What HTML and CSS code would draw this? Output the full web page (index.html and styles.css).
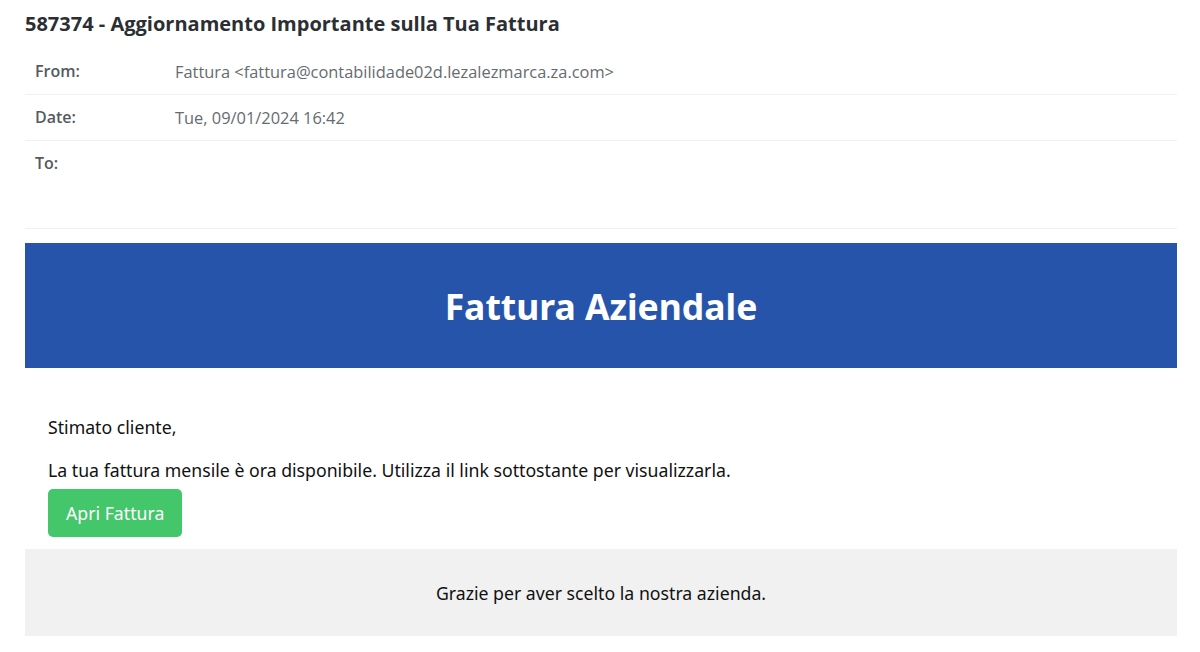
FILE: index.html
```html
<!DOCTYPE html>
<html lang="it">
<head>
<meta charset="utf-8">
<title>587374 - Aggiornamento Importante sulla Tua Fattura</title>
<link rel="stylesheet" href="styles.css">
</head>
<body>
<div class="page">
  <h1 class="subject">587374 - Aggiornamento Importante sulla Tua Fattura</h1>
  <div class="meta">
    <div class="row">
      <div class="label">From:</div>
      <div class="value">Fattura &lt;fattura@contabilidade02d.lezalezmarca.za.com&gt;</div>
    </div>
    <div class="row">
      <div class="label">Date:</div>
      <div class="value">Tue, 09/01/2024 16:42</div>
    </div>
    <div class="row row-to">
      <div class="label">To:</div>
      <div class="value"></div>
    </div>
  </div>
  <div class="mail">
    <div class="banner">Fattura Aziendale</div>
    <div class="content">
      <p class="greet">Stimato cliente,</p>
      <p class="msg">La tua fattura mensile è ora disponibile. Utilizza il link sottostante per visualizzarla.</p>
      <a class="btn" href="#">Apri Fattura</a>
    </div>
    <div class="footer">Grazie per aver scelto la nostra azienda.</div>
  </div>
</div>
</body>
</html>
```

FILE: styles.css
```css
html, body {
  margin: 0;
  padding: 0;
  background: #ffffff;
}

.page {
  padding: 10px 23px 0 25px;
  font-family: "Open Sans", "Noto Sans", sans-serif;
}

.subject {
  margin: 0 0 11px 0;
  font-size: 20px;
  line-height: 28px;
  font-weight: 700;
  color: #2b2f33;
}

.meta {
  display: flex;
  flex-direction: column;
}

.row {
  display: flex;
  align-items: flex-start;
  padding: 12px 10px;
  border-bottom: 1px solid #eef2f7;
  font-size: 16px;
  line-height: 21px;
}

.row-to {
  min-height: 63px;
}

.label {
  width: 140px;
  flex: none;
  font-weight: 600;
  color: #555a60;
}

.value {
  font-size: 16.4px;
  color: #666b70;
}

.mail {
  margin-top: 14px;
  font-family: "Noto Sans", "Open Sans", sans-serif;
}

.banner {
  height: 125px;
  display: flex;
  align-items: center;
  justify-content: center;
  background: #2754ab;
  color: #ffffff;
  font-size: 35.5px;
  font-weight: 700;
}

.content {
  padding: 47px 23px 12px 23px;
  display: flex;
  flex-direction: column;
  align-items: flex-start;
}

.greet, .msg {
  margin: 0;
  font-size: 17.7px;
  line-height: 24px;
  color: #111111;
}

.greet {
  margin-bottom: 19px;
}

.btn {
  margin-top: 7px;
  display: inline-flex;
  align-items: center;
  height: 48px;
  padding: 0 18px;
  border-radius: 5px;
  background: #44c66a;
  color: #ffffff;
  font-size: 17.7px;
  text-decoration: none;
}

.footer {
  height: 87px;
  display: flex;
  align-items: center;
  justify-content: center;
  background: #f1f1f1;
  color: #111111;
  font-size: 17.7px;
}
```
